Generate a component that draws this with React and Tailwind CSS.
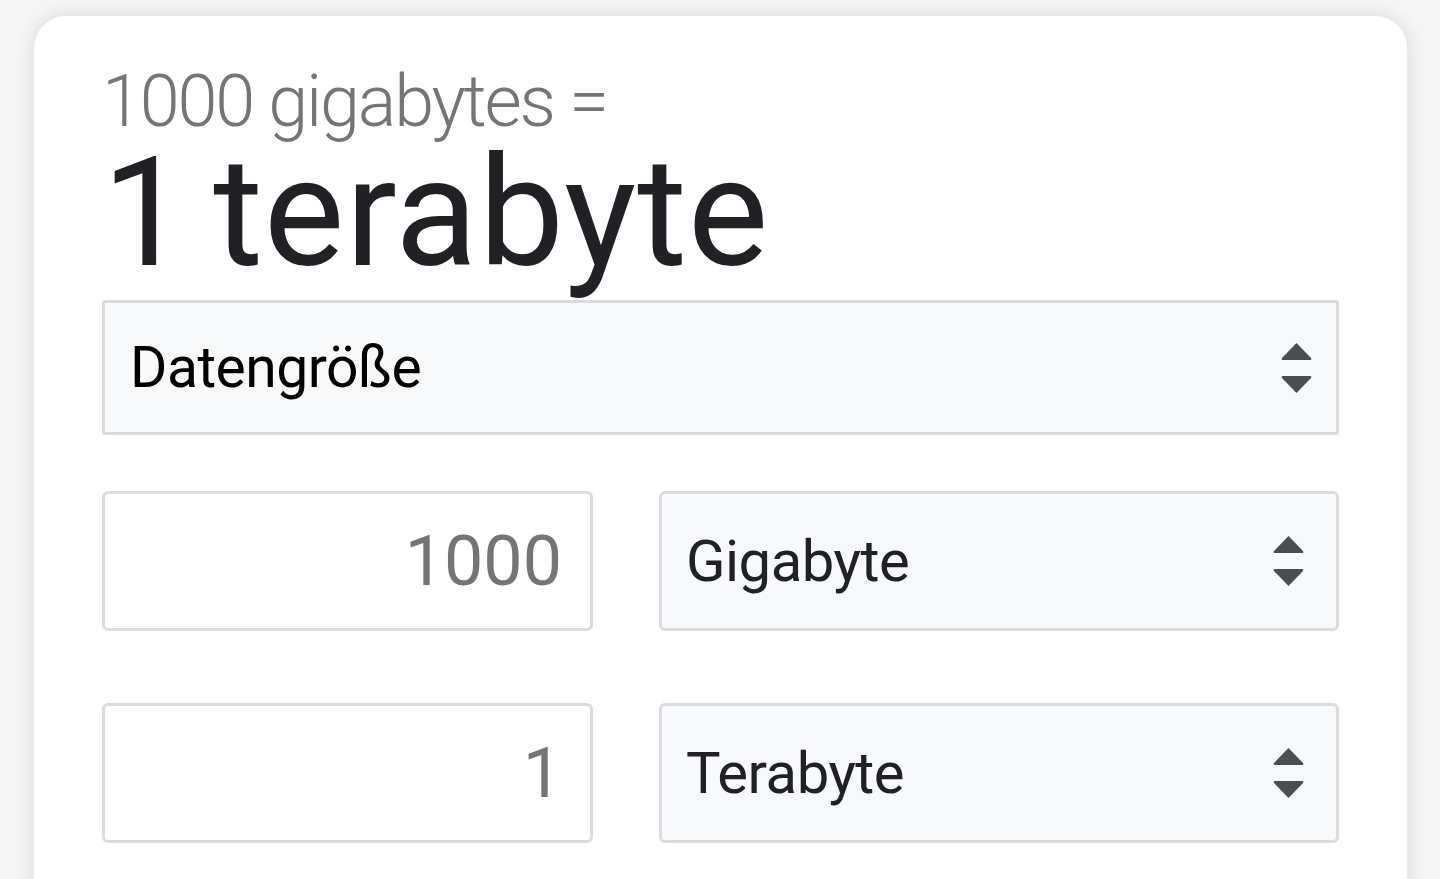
import React from 'react';

function UpDown({ className }) {
  return (
    <svg className={className} width="31" height="50" viewBox="0 0 31 50" fill="#4a4d52">
      <path d="M15.5 0 L30 15 Q31 17 29 17 L2 17 Q0 17 1 15 Z" />
      <path d="M15.5 50 L30 35 Q31 33 29 33 L2 33 Q0 33 1 35 Z" />
    </svg>
  );
}

function UnitSelect({ label }) {
  return (
    <div className="flex h-[140px] items-center justify-between rounded-[6px] border-[3px] border-[#dadce0] bg-[#f8f9fa] pl-[24px] pr-[32px]">
      <span className="text-[58px] leading-none tracking-[-0.5px] text-[#202124]">{label}</span>
      <UpDown />
    </div>
  );
}

function NumberBox({ value }) {
  return (
    <input
      readOnly
      value={value}
      className="h-[140px] w-full rounded-[6px] border-[3px] border-[#dadce0] bg-white pr-[28px] text-right text-[70px] text-[#757575] outline-none"
    />
  );
}

export default function App() {
  return (
    <div className="min-h-screen overflow-hidden bg-[#f6f6f6] pl-[34px] pt-[16px]" style={{ fontFamily: 'Roboto, "Liberation Sans", sans-serif' }}>
      <div className="h-[900px] w-[1373px] rounded-t-[32px] bg-white pl-[68px] pt-[49px] shadow-[0_0_22px_rgba(0,0,0,0.13)]">
        <div className="text-[72px] font-light leading-[74px] tracking-[-2.2px] text-[#757575]">1000 gigabytes =</div>
        <div className="text-[152px] leading-[148px] tracking-[1px] text-[#202124] [word-spacing:-14px]">1 terabyte</div>

        {/* unit type */}
        <div className="mt-[13px] flex h-[135px] w-[1237px] items-center justify-between rounded-[3px] border-[3px] border-[#dadce0] bg-[#f8f9fa] pl-[25px] pr-[24px]">
          <span className="text-[57px] leading-none tracking-[-0.5px] text-black">Datengröße</span>
          <UpDown />
        </div>

        <div className="mt-[56px] grid grid-cols-[491px_680px] gap-x-[66px] gap-y-[72px]">
          <NumberBox value="1000" />
          <UnitSelect label="Gigabyte" />
          <NumberBox value="1" />
          <UnitSelect label="Terabyte" />
        </div>
      </div>
    </div>
  );
}
